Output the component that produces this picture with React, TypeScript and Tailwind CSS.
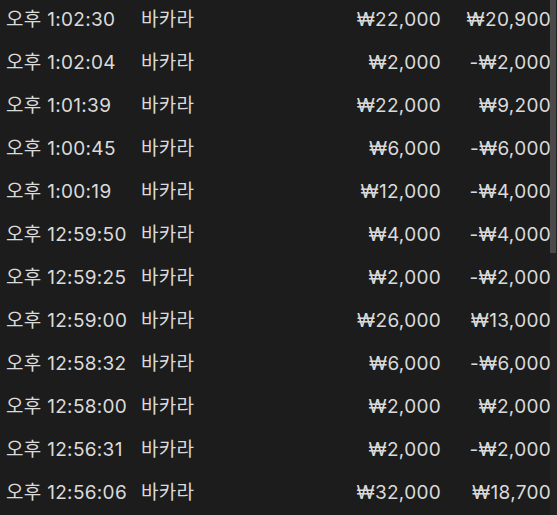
import React from 'react';

type Bet = {
  time: string;
  game: string;
  amount: string;
  profit: string;
};

const bets: Bet[] = [
  { time: '오후 1:02:30', game: '바카라', amount: '₩22,000', profit: '₩20,900' },
  { time: '오후 1:02:04', game: '바카라', amount: '₩2,000', profit: '-₩2,000' },
  { time: '오후 1:01:39', game: '바카라', amount: '₩22,000', profit: '₩9,200' },
  { time: '오후 1:00:45', game: '바카라', amount: '₩6,000', profit: '-₩6,000' },
  { time: '오후 1:00:19', game: '바카라', amount: '₩12,000', profit: '-₩4,000' },
  { time: '오후 12:59:50', game: '바카라', amount: '₩4,000', profit: '-₩4,000' },
  { time: '오후 12:59:25', game: '바카라', amount: '₩2,000', profit: '-₩2,000' },
  { time: '오후 12:59:00', game: '바카라', amount: '₩26,000', profit: '₩13,000' },
  { time: '오후 12:58:32', game: '바카라', amount: '₩6,000', profit: '-₩6,000' },
  { time: '오후 12:58:00', game: '바카라', amount: '₩2,000', profit: '₩2,000' },
  { time: '오후 12:56:31', game: '바카라', amount: '₩2,000', profit: '-₩2,000' },
  { time: '오후 12:56:06', game: '바카라', amount: '₩32,000', profit: '₩18,700' },
];

const App: React.FC = () => {
  return (
    <div
      className="relative h-[515px] w-[557px] overflow-hidden bg-[#1c1c1c] text-[#dadada]"
      style={{ fontFamily: 'Inter, "Noto Sans CJK KR", sans-serif' }}
    >
      {/* Rows */}
      <div className="-mt-[1px] flex flex-col">
        {bets.map((bet, i) => (
          <div key={i} className="flex h-[43px] items-center pl-[6px] pr-[6px] text-[19px] tracking-[0.3px]">
            <span className="w-[135px] shrink-0">{bet.time}</span>
            <span className="flex-1">{bet.game}</span>
            <span className="text-right">{bet.amount}</span>
            <span className="w-[110px] shrink-0 text-right">{bet.profit}</span>
          </div>
        ))}
      </div>

      {/* Scrollbar */}
      <div className="absolute right-0 top-0 h-full w-[7px] bg-[#222222]">
        <div className="h-[253px] w-[6px] bg-[#4a4a4a]" />
      </div>
    </div>
  );
};

export default App;
